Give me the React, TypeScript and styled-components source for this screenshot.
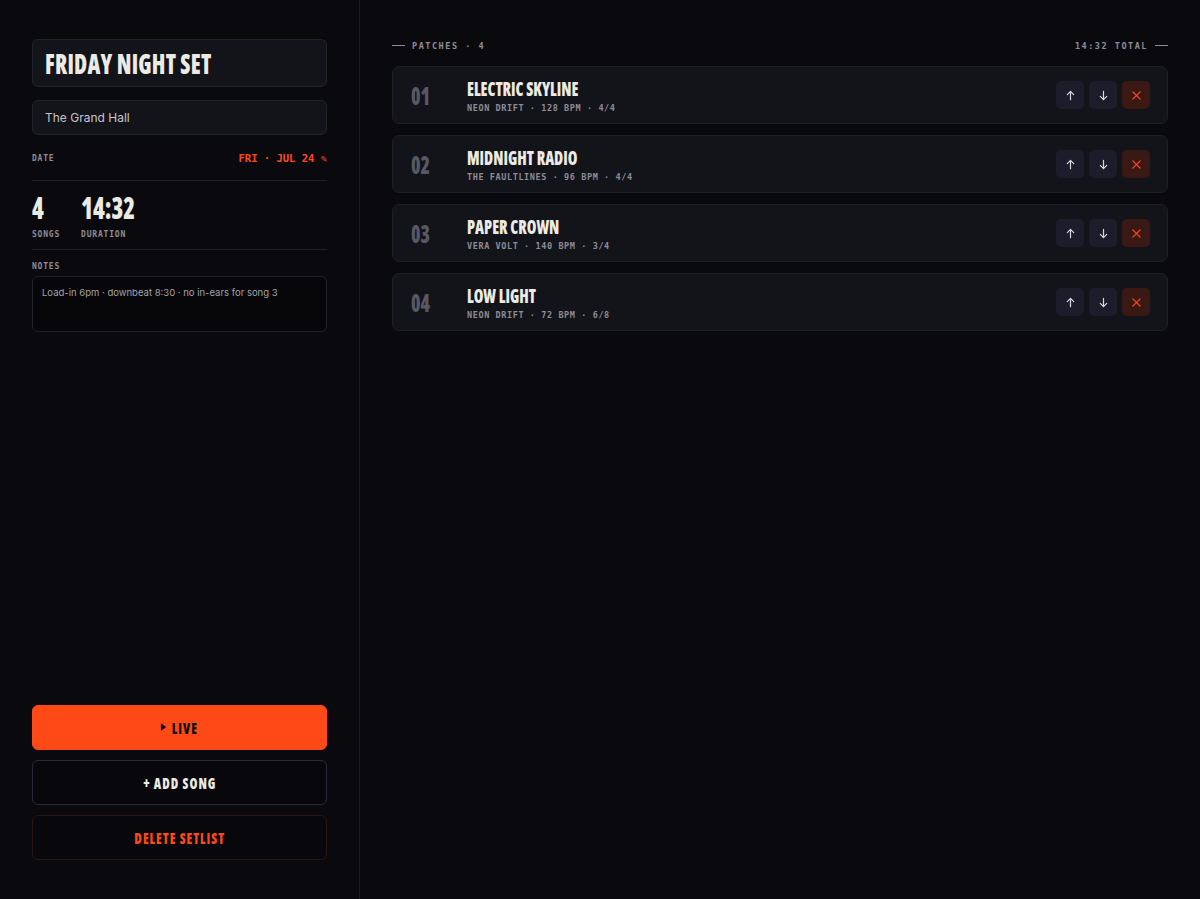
import React from 'react';
import styled, {createGlobalStyle} from 'styled-components';

const display = `"Open Sans", "DejaVu Sans", sans-serif`;
const mono = `"DejaVu Sans Mono", "Liberation Mono", monospace`;
const body = `Inter, "Noto Sans", sans-serif`;

const orange = '#ff4a17';
const ink = '#ecebe3';
const muted = '#8d8d97';

const GlobalStyle = createGlobalStyle`
  html, body {
    margin: 0;
    padding: 0;
    background: #0a0a0e;
    height: 100%;
  }
  #root {
    height: 100%;
  }
  * {
    box-sizing: border-box;
  }
`;

const Shell = styled.div`
  display: flex;
  height: 899px;
  background: #0a0a0e;
  color: ${ink};
  font-family: ${body};
`;

const Sidebar = styled.aside`
  width: 360px;
  flex: none;
  display: flex;
  flex-direction: column;
  padding: 39px 32px 39px;
  border-right: 1px solid #1b1b23;
`;

// condensed display face, squeezed a bit further so it reads like the poster type
const Display = styled.span<{$origin?: string}>`
  display: inline-block;
  font-family: ${display};
  font-weight: 800;
  font-stretch: 75%;
  transform: scaleX(0.8);
  transform-origin: ${p => p.$origin || 'left center'};
  white-space: nowrap;
`;

const TitleBox = styled.div`
  height: 48px;
  display: flex;
  align-items: center;
  padding: 0 12px;
  background: #13131a;
  border: 1px solid #22222c;
  border-radius: 6px;
  font-size: 28px;
  letter-spacing: 0.01em;
  color: ${ink};
`;

const VenueBox = styled.div`
  height: 35px;
  margin-top: 13px;
  display: flex;
  align-items: center;
  padding: 0 12px;
  background: #13131a;
  border: 1px solid #22222c;
  border-radius: 6px;
  font-size: 12px;
  color: #c6c6cb;
`;

const DateRow = styled.div`
  display: flex;
  justify-content: space-between;
  align-items: center;
  padding: 17px 0 16px;
  border-bottom: 1px solid #1f1f28;
`;

const Label = styled.span`
  font-family: ${mono};
  font-weight: 700;
  font-size: 8px;
  letter-spacing: 0.1em;
  color: ${muted};
  text-transform: uppercase;
`;

const DateValue = styled.span`
  font-family: ${mono};
  font-weight: 700;
  font-size: 10.5px;
  color: ${orange};
`;

const Stats = styled.div`
  display: flex;
  gap: 21px;
  padding: 6px 0 10px;
  border-bottom: 1px solid #1f1f28;
`;

const Stat = styled.div`
  display: flex;
  flex-direction: column;
  gap: 1px;
`;

const StatValue = styled.div`
  font-size: 30px;
  line-height: 41px;
  color: ${ink};
`;

const NotesLabel = styled(Label)`
  display: block;
  margin-top: 12px;
  margin-bottom: 5px;
`;

const Notes = styled.div`
  height: 56px;
  padding: 10px 9px;
  background: #060609;
  border: 1px solid #22222c;
  border-radius: 6px;
  font-size: 9.5px;
  color: #a3a3aa;
`;

const Spacer = styled.div`
  flex: 1;
`;

const ActionButton = styled.button<{$kind: 'live' | 'add' | 'delete'}>`
  height: 45px;
  margin-top: ${p => (p.$kind === 'live' ? '0' : '10px')};
  display: flex;
  align-items: center;
  justify-content: center;
  border-radius: 6px;
  font-size: 16px;
  letter-spacing: 0.08em;
  cursor: pointer;
  background: ${p => (p.$kind === 'live' ? orange : '#08080c')};
  color: ${p => (p.$kind === 'live' ? '#0a0a0e' : p.$kind === 'add' ? ink : orange)};
  border: 1px solid ${p => (p.$kind === 'live' ? orange : p.$kind === 'add' ? '#2a2a3a' : '#2a1510')};
`;

const Main = styled.main`
  flex: 1;
  padding: 39px 32px;
`;

const Header = styled.div`
  display: flex;
  justify-content: space-between;
  align-items: center;
  height: 13px;
  margin-bottom: 14px;
  font-family: ${mono};
  font-weight: 700;
  font-size: 8.5px;
  letter-spacing: 0.18em;
  color: ${muted};
`;

const HeaderSide = styled.span`
  display: flex;
  align-items: center;
  gap: 7px;
`;

const Rule = styled.span`
  width: 13px;
  height: 1.5px;
  background: ${muted};
`;

const List = styled.div`
  display: flex;
  flex-direction: column;
  gap: 11px;
`;

const Card = styled.div`
  height: 58px;
  display: flex;
  align-items: center;
  padding: 0 17px 0 18px;
  background: #13131a;
  border: 1px solid #1e1e27;
  border-radius: 7px;
`;

const Num = styled.div`
  width: 56px;
  font-size: 24px;
  color: #585863;
`;

const Info = styled.div`
  flex: 1;
  display: flex;
  flex-direction: column;
  gap: 3px;
`;

const SongTitle = styled.div`
  font-size: 19.5px;
  line-height: 21px;
  color: ${ink};
`;

const Meta = styled.span`
  font-family: ${mono};
  font-weight: 700;
  font-size: 8.5px;
  letter-spacing: 0.07em;
  color: ${muted};
`;

const Controls = styled.div`
  display: flex;
  gap: 5px;
`;

const IconButton = styled.button<{$danger?: boolean}>`
  width: 28px;
  height: 28px;
  padding: 0;
  display: flex;
  align-items: center;
  justify-content: center;
  border: none;
  border-radius: 5px;
  cursor: pointer;
  background: ${p => (p.$danger ? '#3a1914' : '#1c1c2a')};
  color: ${p => (p.$danger ? orange : '#d8d8de')};
`;

const Arrow = ({down}: {down?: boolean}) => (
  <svg width="11" height="11" viewBox="0 0 12 12" fill="none" stroke="currentColor" strokeWidth="1.3" strokeLinecap="round" strokeLinejoin="round">
    {down ? (
      <path d="M6 1.5v9M2.5 7l3.5 3.5L9.5 7"/>
    ) : (
      <path d="M6 10.5v-9M2.5 5L6 1.5 9.5 5"/>
    )}
  </svg>
);

const Cross = () => (
  <svg width="11" height="11" viewBox="0 0 12 12" fill="none" stroke="currentColor" strokeWidth="1.4" strokeLinecap="round">
    <path d="M2 2l8 8M10 2l-8 8"/>
  </svg>
);

const Play = () => (
  <svg width="7" height="8" viewBox="0 0 7 8" style={{marginRight: 7, verticalAlign: 'middle', position: 'relative', top: -2}}>
    <path d="M0 0L7 4L0 8Z" fill="currentColor"/>
  </svg>
);

const songs = [
  {title: 'ELECTRIC SKYLINE', meta: 'NEON DRIFT · 128 BPM · 4/4'},
  {title: 'MIDNIGHT RADIO', meta: 'THE FAULTLINES · 96 BPM · 4/4'},
  {title: 'PAPER CROWN', meta: 'VERA VOLT · 140 BPM · 3/4'},
  {title: 'LOW LIGHT', meta: 'NEON DRIFT · 72 BPM · 6/8'},
];

export default function App() {
  return (
    <Shell>
      <GlobalStyle/>
      <Sidebar>
        <TitleBox><Display>FRIDAY NIGHT SET</Display></TitleBox>
        <VenueBox>The Grand Hall</VenueBox>
        <DateRow>
          <Label>Date</Label>
          <DateValue>FRI · JUL 24 ✎</DateValue>
        </DateRow>
        <Stats>
          <Stat>
            <StatValue><Display>4</Display></StatValue>
            <Label>Songs</Label>
          </Stat>
          <Stat>
            <StatValue><Display>14:32</Display></StatValue>
            <Label>Duration</Label>
          </Stat>
        </Stats>
        <NotesLabel>Notes</NotesLabel>
        <Notes>Load-in 6pm · downbeat 8:30 · no in-ears for song 3</Notes>
        <Spacer/>
        <ActionButton $kind="live"><Display $origin="center"><Play/>LIVE</Display></ActionButton>
        <ActionButton $kind="add"><Display $origin="center">+ ADD SONG</Display></ActionButton>
        <ActionButton $kind="delete"><Display $origin="center">DELETE SETLIST</Display></ActionButton>
      </Sidebar>
      <Main>
        <Header>
          <HeaderSide><Rule/>PATCHES · 4</HeaderSide>
          <HeaderSide>14:32 TOTAL<Rule/></HeaderSide>
        </Header>
        <List>
          {songs.map((s, i) => (
            <Card key={s.title}>
              <Num><Display>{String(i + 1).padStart(2, '0')}</Display></Num>
              <Info>
                <SongTitle><Display>{s.title}</Display></SongTitle>
                <Meta>{s.meta}</Meta>
              </Info>
              <Controls>
                <IconButton><Arrow/></IconButton>
                <IconButton><Arrow down/></IconButton>
                <IconButton $danger><Cross/></IconButton>
              </Controls>
            </Card>
          ))}
        </List>
      </Main>
    </Shell>
  );
}
